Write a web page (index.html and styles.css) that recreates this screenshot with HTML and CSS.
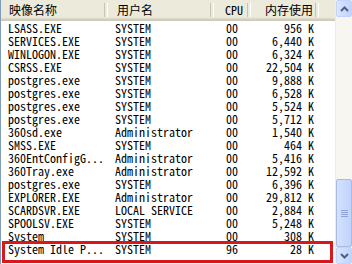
FILE: index.html
```html
<!DOCTYPE html>
<html lang="zh-CN">
<head>
  <meta charset="UTF-8" />
  <title>任务管理器 - 进程</title>
  <link rel="stylesheet" href="styles.css">
</head>
<body>
  <div class="frame">
    <div class="list">
      <!-- 列标题 -->
      <div class="row head">
        <div class="cell name">映像名称</div>
        <div class="cell user">用户名</div>
        <div class="cell cpu">CPU</div>
        <div class="cell mem">内存使用</div>
        <div class="cell rest"></div>
      </div>

      <div class="row"><div class="cell name">LSASS.EXE</div><div class="cell user">SYSTEM</div><div class="cell cpu">00</div><div class="cell mem">956 K</div></div>
      <div class="row"><div class="cell name">SERVICES.EXE</div><div class="cell user">SYSTEM</div><div class="cell cpu">00</div><div class="cell mem">6,440 K</div></div>
      <div class="row"><div class="cell name">WINLOGON.EXE</div><div class="cell user">SYSTEM</div><div class="cell cpu">00</div><div class="cell mem">6,324 K</div></div>
      <div class="row"><div class="cell name">CSRSS.EXE</div><div class="cell user">SYSTEM</div><div class="cell cpu">00</div><div class="cell mem">22,504 K</div></div>
      <div class="row"><div class="cell name">postgres.exe</div><div class="cell user">SYSTEM</div><div class="cell cpu">00</div><div class="cell mem">9,888 K</div></div>
      <div class="row"><div class="cell name">postgres.exe</div><div class="cell user">SYSTEM</div><div class="cell cpu">00</div><div class="cell mem">6,528 K</div></div>
      <div class="row"><div class="cell name">postgres.exe</div><div class="cell user">SYSTEM</div><div class="cell cpu">00</div><div class="cell mem">5,524 K</div></div>
      <div class="row"><div class="cell name">postgres.exe</div><div class="cell user">SYSTEM</div><div class="cell cpu">00</div><div class="cell mem">5,712 K</div></div>
      <div class="row"><div class="cell name">360sd.exe</div><div class="cell user">Administrator</div><div class="cell cpu">00</div><div class="cell mem">1,540 K</div></div>
      <div class="row"><div class="cell name">SMSS.EXE</div><div class="cell user">SYSTEM</div><div class="cell cpu">00</div><div class="cell mem">464 K</div></div>
      <div class="row"><div class="cell name">360EntConfigG...</div><div class="cell user">Administrator</div><div class="cell cpu">00</div><div class="cell mem">5,416 K</div></div>
      <div class="row"><div class="cell name">360Tray.exe</div><div class="cell user">Administrator</div><div class="cell cpu">00</div><div class="cell mem">12,592 K</div></div>
      <div class="row"><div class="cell name">postgres.exe</div><div class="cell user">SYSTEM</div><div class="cell cpu">00</div><div class="cell mem">6,396 K</div></div>
      <div class="row"><div class="cell name">EXPLORER.EXE</div><div class="cell user">Administrator</div><div class="cell cpu">00</div><div class="cell mem">29,812 K</div></div>
      <div class="row"><div class="cell name">SCARDSVR.EXE</div><div class="cell user">LOCAL SERVICE</div><div class="cell cpu">00</div><div class="cell mem">2,884 K</div></div>
      <div class="row"><div class="cell name">SPOOLSV.EXE</div><div class="cell user">SYSTEM</div><div class="cell cpu">00</div><div class="cell mem">5,248 K</div></div>
      <div class="row"><div class="cell name">System</div><div class="cell user">SYSTEM</div><div class="cell cpu">00</div><div class="cell mem">308 K</div></div>
      <div class="row"><div class="cell name">System Idle P...</div><div class="cell user">SYSTEM</div><div class="cell cpu">96</div><div class="cell mem">28 K</div></div>

      <!-- 红框标注 -->
      <div class="mark"></div>
    </div>

    <!-- 滚动条 -->
    <div class="scrollbar">
      <div class="sb-btn">
        <svg width="9" height="6" viewBox="0 0 9 6"><path d="M1 5 L4.5 1.5 L8 5" fill="none" stroke="#4d6185" stroke-width="2"/></svg>
      </div>
      <div class="sb-track">
        <div class="sb-thumb"><span class="grip"></span></div>
      </div>
      <div class="sb-btn">
        <svg width="9" height="6" viewBox="0 0 9 6"><path d="M1 1 L4.5 4.5 L8 1" fill="none" stroke="#4d6185" stroke-width="2"/></svg>
      </div>
    </div>
  </div>
</body>
</html>
```

FILE: styles.css
```css
* { box-sizing: border-box; margin: 0; padding: 0; }

body {
  width: 352px;
  height: 264px;
  overflow: hidden;
  background: #fff;
  font-family: "Noto Sans Mono CJK SC", "Liberation Mono", monospace;
  font-size: 12px;
  color: #000;
}

.frame {
  display: flex;
  width: 352px;
  height: 264px;
  border-left: 1px solid #7f9db9;
}

.list {
  position: relative;
  flex: 1;
  overflow: hidden;
}

.row {
  display: grid;
  grid-template-columns: 107px 106px 37px 68px 1fr;
  height: 13px;
  line-height: 13px;
  white-space: nowrap;
}

.name { padding-left: 7px; }
.user { padding-left: 7px; }
.cpu { padding-left: 12px; }
.mem { text-align: right; padding-right: 5px; }

/* 列标题 */
.head {
  height: 21px;
  line-height: 20px;
  background: linear-gradient(to bottom, #ebeadb 0, #ebeadb 17px, #e5e3d3 18px, #d6d2c2 19px, #cbc7b8 21px);
  font-family: "Noto Sans CJK SC", sans-serif;
  font-size: 12px;
}

.head .cell { position: relative; }

.head .name { padding-left: 8px; }
.head .user { padding-left: 9px; }
.head .cpu { padding-left: 11px; font-family: "Noto Sans Mono CJK SC", "Liberation Mono", monospace; }
.head .mem { padding-right: 6px; }

.head .name::after,
.head .user::after,
.head .cpu::after,
.head .mem::after {
  content: "";
  position: absolute;
  right: 0;
  top: 3px;
  height: 14px;
  width: 2px;
  border-left: 1px solid #c7c5b2;
  border-right: 1px solid #fff;
}

.mark {
  position: absolute;
  left: 1px;
  top: 241px;
  width: 331px;
  height: 22px;
  border: 3px solid #d9181e;
}

/* 滚动条 */
.scrollbar {
  width: 17px;
  display: flex;
  flex-direction: column;
  background: #f7f6f1;
  border-left: 1px solid #eeede5;
}

.sb-btn {
  height: 17px;
  display: flex;
  align-items: center;
  justify-content: center;
  border: 1px solid #c3d3fd;
  border-radius: 2px;
  background: linear-gradient(to right, #dbe6fe, #c1d3fb);
}

.sb-track {
  flex: 1;
  display: flex;
  flex-direction: column;
  justify-content: flex-end;
}

.sb-thumb {
  height: 68px;
  border: 1px solid #a8bbe5;
  border-radius: 2px;
  background: linear-gradient(to right, #d4e1fe, #c1d3fb);
  display: flex;
  align-items: center;
  justify-content: center;
}

.grip {
  width: 7px;
  height: 7px;
  background: repeating-linear-gradient(to bottom, #8ca4d8 0, #8ca4d8 1px, transparent 1px, transparent 2px);
}
```
